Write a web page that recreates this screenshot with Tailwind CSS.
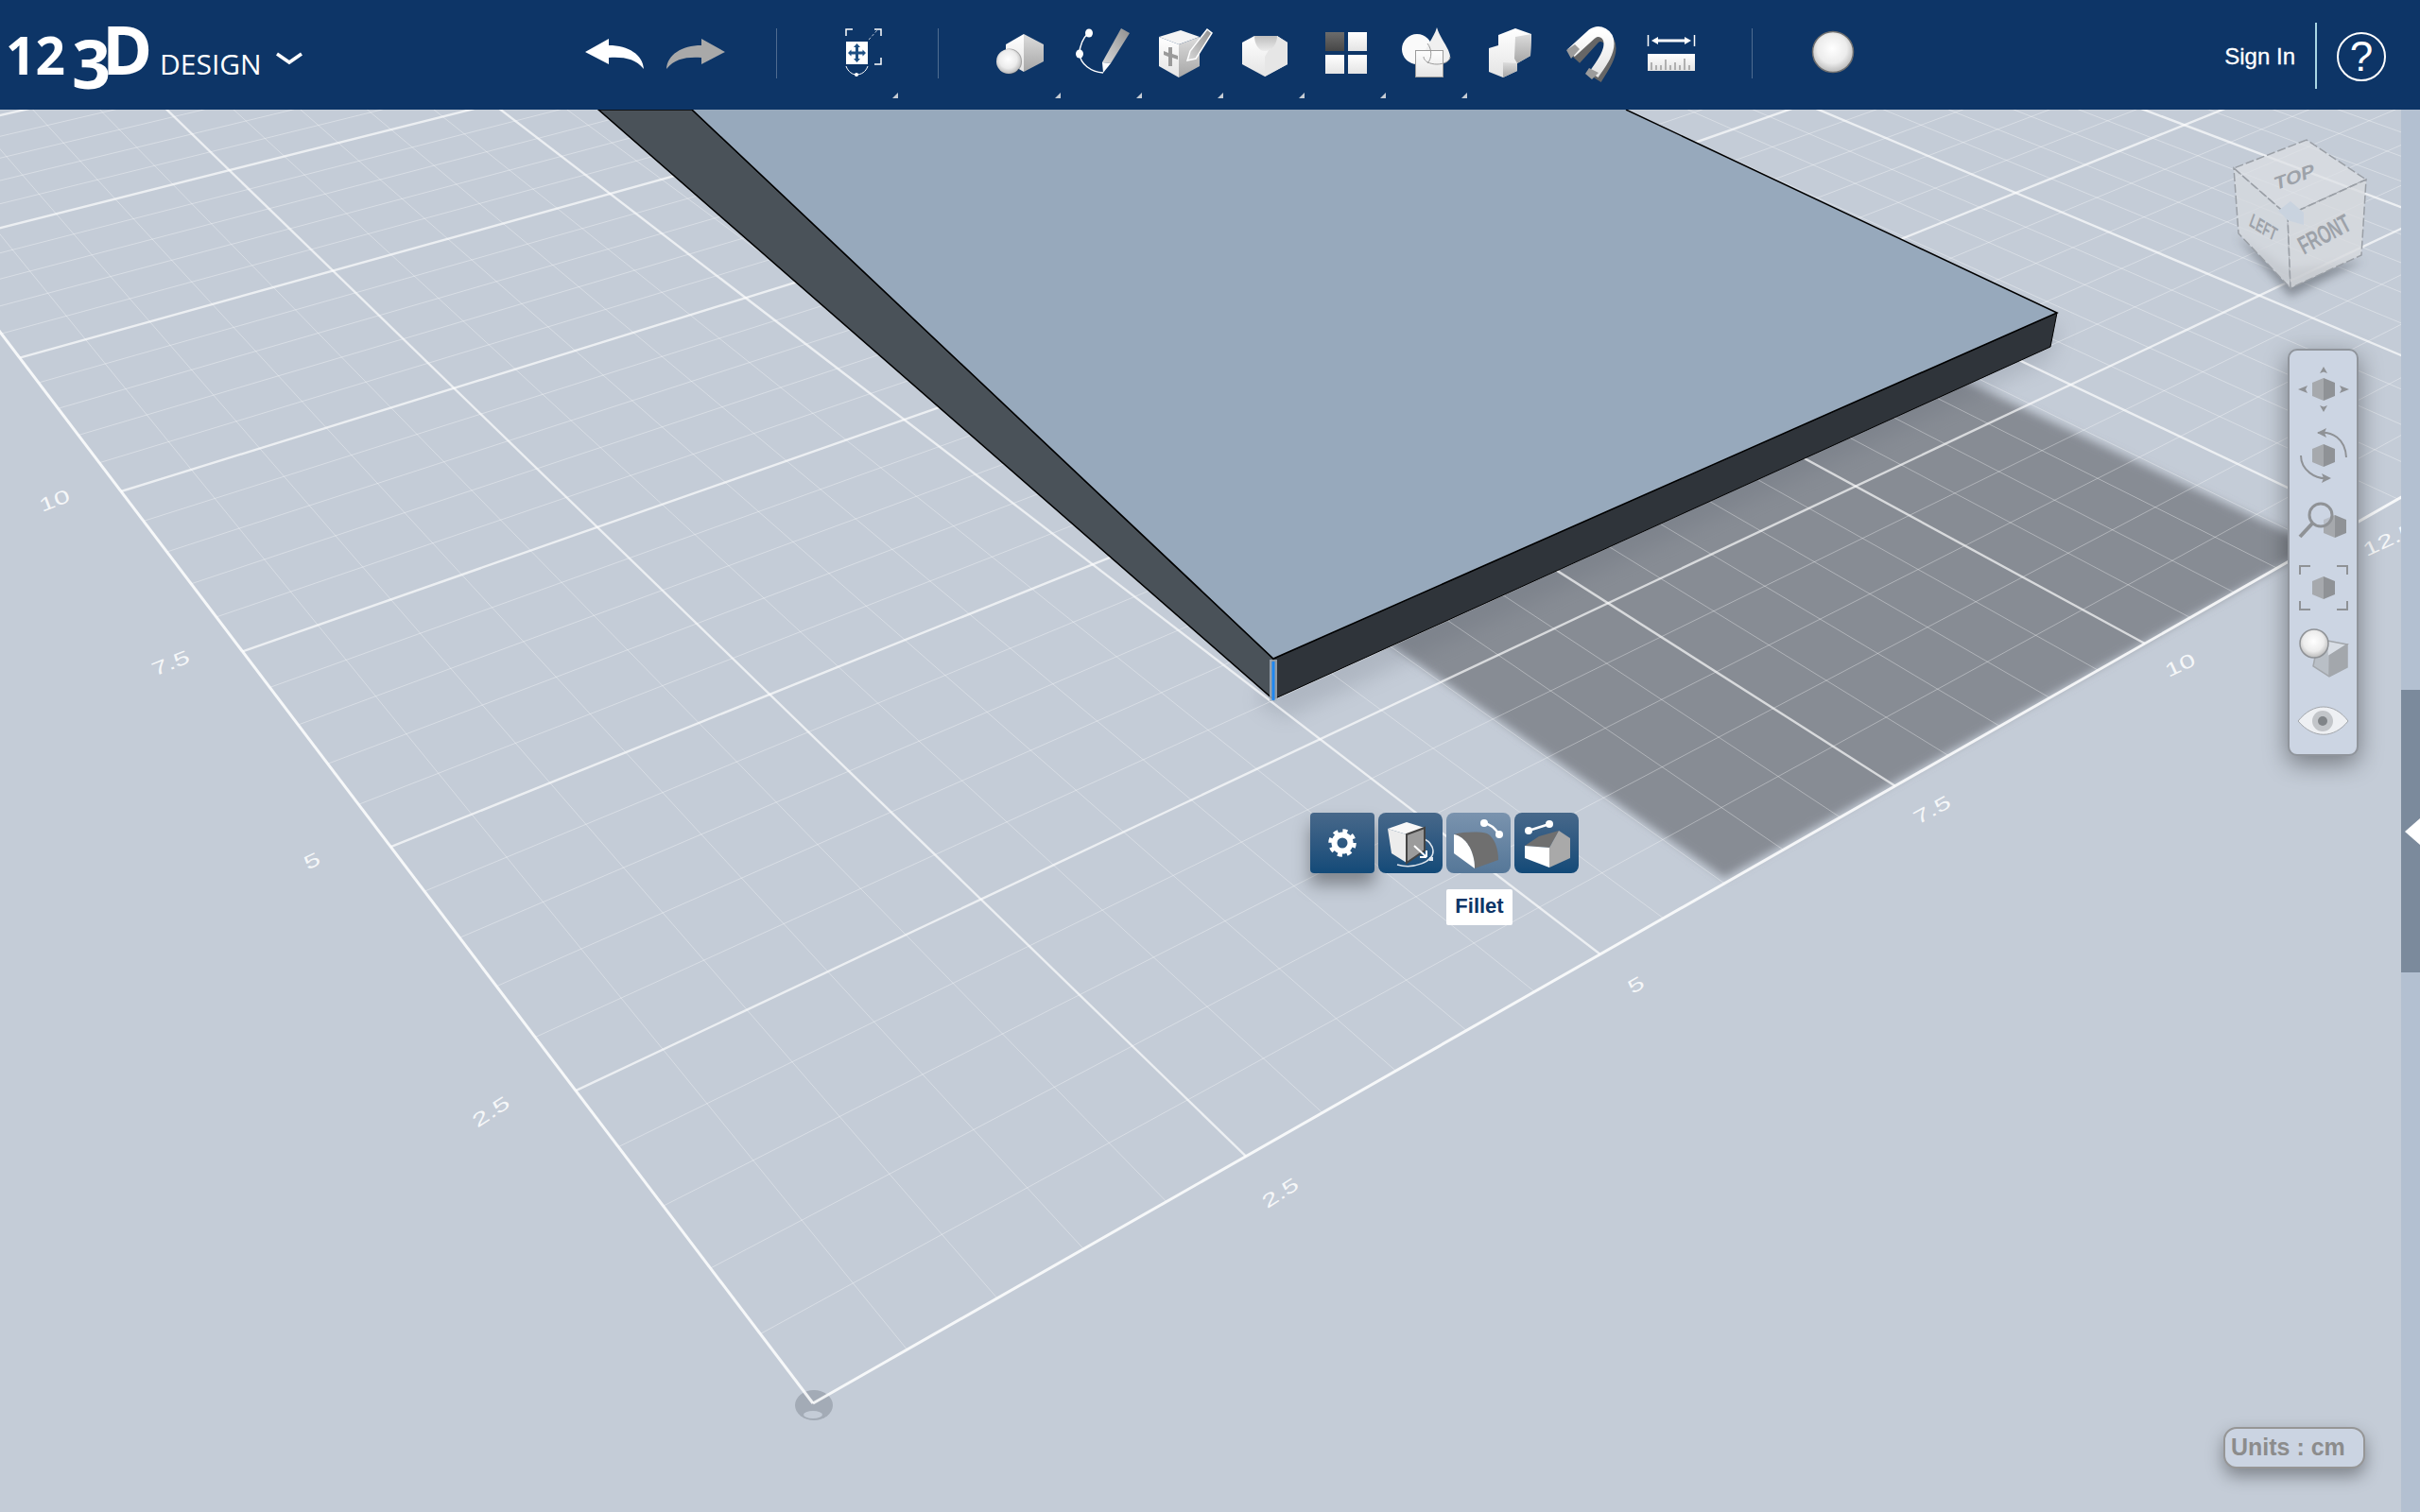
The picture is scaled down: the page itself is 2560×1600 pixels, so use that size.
<!DOCTYPE html>
<html lang="en">
<head>
  <meta charset="UTF-8" />
  <title>123D Design</title>
  <script src="https://cdn.jsdelivr.net/npm/@tailwindcss/browser@4"></script>
</head>
<body class="h-screen w-screen overflow-hidden bg-[#c4ccd7] font-['Liberation_Sans',sans-serif]">

  <!-- shared gradients -->
  <svg class="absolute w-0 h-0">
    <defs>
      <linearGradient id="wg" x1="0" y1="0" x2="0" y2="1"><stop offset="0" stop-color="#ffffff"/><stop offset="1" stop-color="#e4e4e4"/></linearGradient>
      <linearGradient id="gg" x1="0" y1="0" x2="0" y2="1"><stop offset="0" stop-color="#dcdcdc"/><stop offset="1" stop-color="#a6a6a6"/></linearGradient>
      <linearGradient id="dg" x1="0" y1="0" x2="0" y2="1"><stop offset="0" stop-color="#6c6c6c"/><stop offset="1" stop-color="#474747"/></linearGradient>
      <linearGradient id="hollow" x1="0" y1="0" x2="0" y2="1"><stop offset="0" stop-color="#bdbdbd"/><stop offset="1" stop-color="#ececec"/></linearGradient>
      <linearGradient id="pen" x1="1" y1="0" x2="0" y2="1"><stop offset="0" stop-color="#8f8f8f"/><stop offset="1" stop-color="#d8d8d8"/></linearGradient>
      <radialGradient id="ball" cx=".48" cy=".42" r=".6"><stop offset="0" stop-color="#ffffff"/><stop offset=".6" stop-color="#ececec"/><stop offset="1" stop-color="#b4b4b4"/></radialGradient>
      <filter id="b6" x="-20%" y="-20%" width="140%" height="140%"><feGaussianBlur stdDeviation="5"/></filter>
      <filter id="b12" x="-30%" y="-30%" width="160%" height="160%"><feGaussianBlur stdDeviation="10"/></filter>
    </defs>
  </svg>

  <div class="flex flex-col h-full">
    <!-- top bar -->
    <header class="h-[116px] shrink-0 bg-[#0d3567] flex items-start text-white">
      <div class="w-[619px] h-[116px] shrink-0 flex items-start">
        <div class="w-[291px] shrink-0 flex items-baseline h-[116px] pl-[6px] pt-[15px] font-['Open_Sans',sans-serif] leading-none font-bold whitespace-nowrap">
          <span class="w-[70px] shrink-0 text-[55px]">12</span>
          <span class="w-[32px] shrink-0 text-[72px] translate-y-[15px]">3</span>
          <span class="w-[61px] shrink-0 text-[72px]">D</span>
          <span class="text-[30px] font-normal">DESIGN</span>
        </div>
        <svg class="w-[30px] h-[116px]" viewBox="291 0 30 116"><path d="M293 57L306 66L319 57" fill="none" stroke="#fff" stroke-width="3.5"/></svg>
      </div>

      <svg class="w-[62px] h-[116px] shrink-0" viewBox="619 0 62 116"><path d="M619 55L644 41V48C665 48 680 58 681 73C672 62 660 60 644 61V68Z" fill="#fff"/></svg>
      <svg class="ml-[24px] w-[62px] h-[116px] shrink-0" viewBox="705 0 62 116"><path d="M767 55L742 41V48C721 48 706 58 705 73C714 62 726 60 742 61V68Z" fill="#a9a9a9"/></svg>
      <div class="ml-[54px] mt-[30px] w-px h-[53px] bg-[#4f6c90]"></div>

      <!-- transform -->
      <div class="relative ml-[40px] w-[90px] h-[116px] shrink-0">
        <svg class="w-[90px] h-[116px]" viewBox="862 0 90 116">
          <path d="M895 38V31H902M925 31H932V38M932 61V68H925" fill="none" stroke="#fff" stroke-width="1.5"/>
          <path d="M919 42L928 32" stroke="#b8c4d4" stroke-width="1" stroke-dasharray="3 2"/>
          <rect x="895" y="44" width="23" height="24" fill="#fff"/>
          <path d="M906.5 46L910 50H908V54.5H912.5V52.5L916 56L912.5 59.5V57.5H908V62H910L906.5 66L903 62H905V57.5H900.5V59.5L897 56L900.5 52.500V54.5H905V50H903Z" fill="#1d4f82"/>
          <path d="M895 70C897 76 902 79 906 79C911 79 916 76 918 70" fill="none" stroke="#fff" stroke-width="1"/>
          <circle cx="906" cy="79" r="2" fill="#fff"/>
        </svg>
        <svg class="absolute left-[82px] top-[98px] w-[6px] h-[6px]" viewBox="0 0 6 6"><path d="M6 0V6H0Z" fill="#c6ccd4"/></svg>
      </div>
      <div class="ml-[40px] mt-[30px] w-px h-[53px] bg-[#4f6c90]"></div>

      <!-- tool slots, 86px each -->
      <div class="ml-[43px] flex shrink-0">
        <div class="relative w-[86px] h-[116px]">
          <svg class="w-[86px] h-[116px]" viewBox="1036 0 86 116">
            <path d="M1083 36L1064 47V65L1083 76Z" fill="url(#wg)"/>
            <path d="M1083 36L1104 47V65L1083 76Z" fill="url(#gg)"/>
            <ellipse cx="1068" cy="65" rx="13" ry="13.500" fill="#555" opacity=".5"/>
            <ellipse cx="1067" cy="65" rx="13" ry="13" fill="url(#ball)"/>
          </svg>
          <svg class="absolute right-0 top-[98px] w-[6px] h-[6px]" viewBox="0 0 6 6"><path d="M6 0V6H0Z" fill="#c6ccd4"/></svg>
        </div>
        <div class="relative w-[86px] h-[116px]">
          <svg class="w-[86px] h-[116px]" viewBox="1122 0 86 116">
            <path d="M1152 34C1146 40 1142 48 1142 57C1143 68 1154 76 1167 77" fill="none" stroke="#fff" stroke-width="1.500"/>
            <ellipse cx="1152" cy="35" rx="4" ry="4.500" fill="#fff"/>
            <ellipse cx="1142" cy="57" rx="4" ry="4.500" fill="#fff"/>
            <path d="M1186 30L1195 35L1175 67L1166 66Z" fill="url(#pen)"/>
            <path d="M1166 66L1175 67L1167 77Z" fill="#fff"/>
          </svg>
          <svg class="absolute right-0 top-[98px] w-[6px] h-[6px]" viewBox="0 0 6 6"><path d="M6 0V6H0Z" fill="#c6ccd4"/></svg>
        </div>
        <div class="relative w-[86px] h-[116px]">
          <svg class="w-[86px] h-[116px]" viewBox="1208 0 86 116">
            <path d="M1249 32L1226 39L1247 47L1269 39Z" fill="#f4f4f4"/>
            <path d="M1226 39V70L1247 82V47Z" fill="url(#wg)"/>
            <path d="M1247 47L1269 39V70L1247 82Z" fill="url(#gg)"/>
            <path d="M1236 50H1240V57L1246 59V63L1240 61V70H1236V60L1231 58V54L1236 56Z" fill="#9a9a9a"/>
            <path d="M1277 31L1282 35L1265 62L1256 64L1259 54Z" fill="url(#pen)" stroke="#fff" stroke-width="1.500"/>
          </svg>
          <svg class="absolute right-0 top-[98px] w-[6px] h-[6px]" viewBox="0 0 6 6"><path d="M6 0V6H0Z" fill="#c6ccd4"/></svg>
        </div>
        <div class="relative w-[86px] h-[116px]">
          <svg class="w-[86px] h-[116px]" viewBox="1294 0 86 116">
            <path d="M1327 38H1351L1362 45V68L1338 81L1314 68V45Z" fill="url(#wg)"/>
            <path d="M1351 38L1362 45V68L1338 81V60Z" fill="#e6e6e6"/>
            <path d="M1327 38H1351C1351 46 1346 54 1338 54C1331 54 1327 46 1327 38Z" fill="url(#hollow)"/>
          </svg>
          <svg class="absolute right-0 top-[98px] w-[6px] h-[6px]" viewBox="0 0 6 6"><path d="M6 0V6H0Z" fill="#c6ccd4"/></svg>
        </div>
        <div class="relative w-[86px] h-[116px]">
          <svg class="w-[86px] h-[116px]" viewBox="1380 0 86 116">
            <rect x="1402" y="34" width="20" height="20" fill="url(#dg)"/>
            <rect x="1426" y="34" width="20" height="20" fill="url(#wg)"/>
            <rect x="1402" y="58" width="20" height="20" fill="url(#wg)"/>
            <rect x="1426" y="58" width="20" height="20" fill="url(#wg)"/>
          </svg>
          <svg class="absolute right-0 top-[98px] w-[6px] h-[6px]" viewBox="0 0 6 6"><path d="M6 0V6H0Z" fill="#c6ccd4"/></svg>
        </div>
        <div class="relative w-[86px] h-[116px]">
          <svg class="w-[86px] h-[116px]" viewBox="1466 0 86 116">
            <ellipse cx="1499" cy="52" rx="16" ry="16" fill="#fafafa"/>
            <path d="M1520 29C1523 40 1534 52 1534 60C1534 65 1527 68 1520 68C1513 68 1506 65 1506 60C1506 52 1517 40 1520 29Z" fill="#f0f0f0"/>
            <rect x="1497" y="53" width="30" height="29" fill="url(#wg)"/>
            <rect x="1497.500" y="53.500" width="29" height="28" fill="none" stroke="#9b9b9b"/>
            <path d="M1506 60C1506 65 1513 68 1520 68C1527 68 1534 65 1534 60" fill="none" stroke="#9b9b9b"/>
            <path d="M1510 46C1515 52 1515 62 1510 67" fill="none" stroke="#9b9b9b"/>
          </svg>
          <svg class="absolute right-0 top-[98px] w-[6px] h-[6px]" viewBox="0 0 6 6"><path d="M6 0V6H0Z" fill="#c6ccd4"/></svg>
        </div>
        <div class="w-[86px] h-[116px]">
          <svg class="w-[86px] h-[116px]" viewBox="1552 0 86 116">
            <path d="M1585 37L1603 30L1620 36L1619 59L1605 67V75L1590 82L1575 76V51L1585 48Z" fill="url(#wg)"/>
            <path d="M1603 39L1620 36L1619 59L1605 67L1602 62Z" fill="url(#gg)"/>
            <path d="M1590 66L1605 67V75L1590 82Z" fill="url(#gg)"/>
          </svg>
        </div>
        <div class="w-[86px] h-[116px]">
          <svg class="w-[86px] h-[116px]" viewBox="1638 0 86 116">
            <path d="M1665 60L1685 38C1692 32 1702 38 1702 48C1702 58 1695 68 1687 81" fill="none" stroke="#666" stroke-width="11" transform="translate(2 3)"/>
            <path d="M1662 56L1684 36C1692 30 1702 36 1702 46C1702 57 1694 67 1686 79" fill="none" stroke="url(#wg)" stroke-width="11"/>
            <path d="M1657 53L1666 47L1671 52L1662 62Z" fill="#9c9c9c"/>
            <path d="M1681 72L1691 77L1684 84L1677 78Z" fill="#9c9c9c"/>
          </svg>
        </div>
        <div class="w-[86px] h-[116px]">
          <svg class="w-[86px] h-[116px]" viewBox="1724 0 86 116">
            <path d="M1743.500 37V49M1792.500 37V49" stroke="#fff" stroke-width="1.500"/>
            <path d="M1747 43L1754 39V41.500H1782V39L1789 43L1782 47V44.500H1754V47Z" fill="#fff"/>
            <rect x="1743" y="57" width="50" height="18" fill="url(#wg)"/>
            <path d="M1747 74V66M1752 74V69M1757 74V69M1762 74V63M1767 74V69M1772 74V66M1777 74V69M1782 74V62M1787 74V69" stroke="#9c9c9c" stroke-width="1.500"/>
          </svg>
        </div>
      </div>

      <div class="ml-[43px] mt-[30px] w-px h-[53px] bg-[#4f6c90]"></div>
      <svg class="ml-[60px] w-[50px] h-[116px] shrink-0" viewBox="1915 0 50 116">
        <circle cx="1940" cy="55" r="21.500" fill="url(#ball)" stroke="#6f6f6f" stroke-width="1.500"/>
      </svg>

      <div class="ml-auto flex items-start shrink-0 pr-[36px]">
        <span class="mt-[46px] translate-x-[1px] text-[24px] leading-[28px] font-['Liberation_Sans',sans-serif] [-webkit-text-stroke:0.3px_white]">Sign In</span>
        <div class="ml-[22px] mt-[24px] w-[2px] h-[70px] bg-[#a9d6e3]"></div>
        <div class="ml-[21px] mt-[34px] w-[52px] h-[52px] rounded-full border-2 border-white flex items-center justify-center text-[44px] leading-none font-['Liberation_Sans',sans-serif]">?</div>
      </div>
    </header>

    <!-- workspace -->
    <main class="flex-1 flex relative min-h-0">
      <div class="flex-1 relative overflow-hidden bg-[#c4ccd7]">
        <svg class="absolute inset-0 w-[2540px] h-[1484px]" viewBox="0 116 2540 1484">
          <!-- ground shadow -->
          <polygon points="1420,646 1824,929 2450,578 2040,385" fill="#878c94" filter="url(#b6)"/>
          <polygon points="1330,745 1360,760 2170,380 2180,340 1347,700" fill="#5c6470" opacity=".2" filter="url(#b12)"/>

          <ellipse cx="861" cy="1487" rx="20" ry="16" fill="#a3abb6"/>
          <ellipse cx="860" cy="1497" rx="10" ry="4" fill="#c4ccd7"/>

          <!-- grid gets filled in by the script below -->
          <g id="grid" fill="none" stroke="#fff"></g>

          <!-- axis numbers -->
          <g fill="#fff" fill-opacity=".85" font-size="20" font-family="Liberation Sans, sans-serif" text-anchor="middle">
            <text transform="translate(523 1182) rotate(-33) scale(1.55 1)">2.5</text>
            <text transform="translate(333 917) rotate(-26) scale(1.5 1)">5</text>
            <text transform="translate(183 708) rotate(-22) scale(1.5 1)">7.5</text>
            <text transform="translate(60 536) rotate(-21) scale(1.5 1)">10</text>
            <text transform="translate(1358 1268) rotate(-33) scale(1.5 1)">2.5</text>
            <text transform="translate(1734 1048) rotate(-30) scale(1.5 1)">5</text>
            <text transform="translate(2047 863) rotate(-29) scale(1.5 1)">7.5</text>
            <text transform="translate(2309 710) rotate(-25) scale(1.5 1)">10</text>
            <text transform="translate(2530 577) rotate(-25) scale(1.5 1)">12.5</text>
          </g>

          <!-- plate -->
          <polygon points="633,116 732,116 1347,697 1347,740" fill="#4a5259" stroke="#000" stroke-width="1.500"/>
          <polygon points="1347,697 2176,331 2169,367 1347,740" fill="#2f343a" stroke="#000" stroke-width="1"/>
          <polygon points="732,116 1720,116 2176,331 1347,697" fill="#97a9bc"/>
          <path d="M732 116L1347 697L2176 331L1720 116" fill="none" stroke="#000" stroke-width="1.500"/>
          <rect x="1343" y="698" width="8" height="44" fill="#aab4bf" opacity=".8"/>
          <rect x="1345.500" y="700" width="3" height="41" fill="#1f88f2"/>

          <!-- view cube -->
          <polygon points="2366,250 2423,314 2500,276 2423,285" fill="#4d535c" opacity=".5" filter="url(#b6)"/>
          <g stroke="#9a9fa6" stroke-width="1.500" stroke-dasharray="9 3">
            <polygon points="2440,148 2363,178 2420,228 2503,190" fill="#dcdfe3" fill-opacity=".72"/>
            <polygon points="2363,178 2420,228 2423,305 2368,247" fill="#d6d9de" fill-opacity=".8"/>
            <polygon points="2420,228 2503,190 2498,270 2423,305" fill="#d8dbdf" fill-opacity=".8"/>
          </g>
          <polygon points="2410,223 2423,213 2437,225 2437,238 2420,233" fill="#c9d3df"/>
          <g fill="#9da2a9" font-weight="bold" font-family="Liberation Sans, sans-serif" text-anchor="middle">
            <text transform="translate(2428 194) rotate(-20) skewX(-14) scale(1.15 1)" font-size="19">TOP</text>
            <text transform="translate(2392 247) rotate(32) skewX(12) scale(.85 1.3)" font-size="15">LEFT</text>
            <text transform="translate(2463 256) rotate(-28) scale(.85 1.35)" font-size="20">FRONT</text>
          </g>
        </svg>

        <!-- navigation panel -->
        <div class="absolute left-[2420px] top-[253px] w-[75px] h-[431px] bg-[#ccd5e3] border-2 border-[#90959c] rounded-[10px] shadow-[0_8px_26px_rgba(0,0,0,0.4)] flex flex-col items-center gap-[10px] pt-[11px]">
          <svg class="w-[60px] h-[60px]" viewBox="2428 382 60 60">
            <path d="M2458 400L2470 405V419L2458 424Z" fill="#8f9296"/><path d="M2458 400L2446 405V419L2458 424Z" fill="#a6a9ad"/>
            <path d="M2458 388L2454 395L2458 393.500L2462 395ZM2458 436L2454 429L2458 430.500L2462 429ZM2431 412L2441 408L2439 412L2441 416ZM2485 412L2475 408L2477 412L2475 416Z" fill="#8f9296"/>
          </svg>
          <svg class="w-[60px] h-[60px]" viewBox="2428 452 60 60">
            <path d="M2458 470L2470 475V489L2458 494Z" fill="#8f9296"/><path d="M2458 470L2446 475V489L2458 494Z" fill="#a6a9ad"/>
            <path d="M2452 458C2467 456 2481 464 2482 484M2434 482C2434 497 2449 508 2464 506" fill="none" stroke="#8f9296" stroke-width="2"/>
            <path d="M2451 458L2461 453L2459 458L2461 463ZM2466 506L2456 501L2458 506L2456 511Z" fill="#8f9296"/>
          </svg>
          <svg class="w-[60px] h-[60px]" viewBox="2428 522 60 60">
            <path d="M2470 545L2482 550V564L2470 569Z" fill="#8f9296"/><path d="M2470 545L2458 550V564L2470 569Z" fill="#a6a9ad"/>
            <ellipse cx="2455" cy="545" rx="12" ry="12" fill="#ccd5e3" fill-opacity=".5" stroke="#8f9296" stroke-width="3"/>
            <path d="M2446 554L2433 568" stroke="#8f9296" stroke-width="4"/>
          </svg>
          <svg class="w-[60px] h-[60px]" viewBox="2428 592 60 60">
            <path d="M2458 610L2470 615V629L2458 634Z" fill="#8f9296"/><path d="M2458 610L2446 615V629L2458 634Z" fill="#a6a9ad"/>
            <path d="M2433 608V599H2444M2472 599H2483V608M2483 636V645H2472M2444 645H2433V636" fill="none" stroke="#8f9296" stroke-width="2"/>
          </svg>
          <svg class="w-[60px] h-[60px]" viewBox="2428 662 60 60">
            <path d="M2450 690L2483 682V706L2464 716L2447 705Z" fill="#b9bfc6" stroke="#a3a7ac" stroke-width="1.500"/>
            <path d="M2462 678L2483 682L2464 694L2464 716" fill="#d9dee5" stroke="#a3a7ac" stroke-width="1.500"/>
            <path d="M2464 694L2483 682V706L2464 716Z" fill="#a3a7ac"/>
            <circle cx="2448" cy="681" r="15" fill="url(#ball)" stroke="#8f9296" stroke-width="1.500"/>
          </svg>
          <svg class="w-[60px] h-[60px]" viewBox="2428 732 60 60">
            <path d="M2431 763C2447 743 2469 743 2484 763C2469 782 2447 782 2431 763Z" fill="#eef0f3" stroke="#a3a7ac" stroke-width="1"/>
            <circle cx="2457" cy="763" r="11" fill="#c2c5c9"/><circle cx="2457" cy="763" r="5" fill="#808488"/>
          </svg>
        </div>

        <!-- mini toolbar -->
        <div class="absolute left-[1386px] top-[744px] flex gap-[4px]">
          <div class="w-[68px] h-[64px] rounded-[4px] bg-linear-to-b from-[#47688a] to-[#124a78] shadow-[0_12px_18px_rgba(0,0,0,0.35)]">
            <svg class="w-[68px] h-[64px]" viewBox="1386 860 68 64">
              <circle cx="1420" cy="892" r="8.500" fill="none" stroke="#fff" stroke-width="6"/>
              <circle cx="1420" cy="892" r="12.500" fill="none" stroke="#fff" stroke-width="4.500" stroke-dasharray="4.900 4.920"/>
            </svg>
          </div>
          <div class="w-[68px] h-[64px] rounded-[8px] bg-linear-to-b from-[#47688a] to-[#124a78]">
            <svg class="w-[68px] h-[64px]" viewBox="1458 860 68 64">
              <path d="M1478 915C1495 920 1517 912 1516 900C1515 893 1511 890 1507 888" fill="none" stroke="#dfe6ee" stroke-width="1.500"/>
              <path d="M1468 877L1488 870L1507 876L1488 883Z" fill="#f8f8f8"/>
              <path d="M1468 877L1488 883V913L1472 903Z" fill="#ececec"/>
              <path d="M1488 883L1507 876V900L1488 913Z" fill="#9b9b9b" stroke="#444" stroke-width="2"/>
              <path d="M1496 895L1509 907M1509 907V900M1509 907H1502" fill="none" stroke="#fff" stroke-width="2"/>
              <rect x="1512" y="907" width="4" height="4" fill="#dfe6ee"/>
            </svg>
          </div>
          <div class="w-[68px] h-[64px] rounded-[8px] bg-linear-to-b from-[#7a93ae] to-[#557798]">
            <svg class="w-[68px] h-[64px]" viewBox="1530 860 68 64">
              <path d="M1538 883C1548 880 1566 880 1573 882C1581 886 1585 898 1585 910L1560 919C1560 900 1550 885 1538 883Z" fill="#6f6f6f"/>
              <path d="M1538 883C1550 885 1560 900 1560 919L1538 903Z" fill="#fff"/>
              <path d="M1570 871C1576 872 1582 877 1586 883" fill="none" stroke="#fff" stroke-width="2.500"/>
              <circle cx="1570" cy="871" r="4" fill="#fff"/><circle cx="1586" cy="883" r="4" fill="#fff"/>
            </svg>
          </div>
          <div class="w-[68px] h-[64px] rounded-[8px] bg-linear-to-b from-[#47688a] to-[#124a78]">
            <svg class="w-[68px] h-[64px]" viewBox="1602 860 68 64">
              <path d="M1617 879L1639 872" stroke="#fff" stroke-width="2.500"/>
              <circle cx="1617" cy="879" r="4" fill="#fff"/><circle cx="1639" cy="872" r="4" fill="#fff"/>
              <path d="M1613 895L1628 885L1649 879L1639 897Z" fill="#6f6f6f"/>
              <path d="M1613 895L1639 897V918L1613 908Z" fill="#fff"/>
              <path d="M1639 897L1649 879L1661 887V908L1639 918Z" fill="#a9a9a9"/>
            </svg>
          </div>
        </div>

        <div class="absolute left-[1530px] top-[825px] w-[70px] h-[38px] bg-white rounded-[2px] flex items-center justify-center pb-[3px] text-[22px] font-bold text-[#0d3567]">Fillet</div>

        <div class="absolute left-[2352px] top-[1394px] w-[150px] h-[44px] bg-[#cbd4e2] border-2 border-[#969696] rounded-[14px] shadow-[0_8px_18px_rgba(0,0,0,0.35)] pl-[6px] flex items-center text-[25px] font-bold text-[#8c8c8c]">Units : cm</div>
      </div>

      <!-- side strip -->
      <div class="w-[20px] shrink-0 bg-[#b3c0d1] relative">
        <div class="absolute left-0 top-[614px] w-[20px] h-[299px] bg-[#7b8a9c] flex items-center justify-end">
          <svg class="w-[16px] h-[28px]" viewBox="0 0 16 28"><path d="M0 14L16 0V28Z" fill="#fff"/></svg>
        </div>
      </div>
    </main>
  </div>

  <script>
    // ground plane: cm -> screen px, fitted to the axis marks
    function plane(u, v) {
      u = u / 10; v = v / 10;
      var w = 1 + 0.445 * u + 0.565 * v;
      return [(860 + 2418.7 * u - 659.6 * v) / w, (1485 - 501 * u - 671.2 * v) / w];
    }
    var grid = document.getElementById('grid');
    function addLine(a, b, width, alpha) {
      var l = document.createElementNS('http://www.w3.org/2000/svg', 'line');
      l.setAttribute('x1', a[0]); l.setAttribute('y1', a[1]);
      l.setAttribute('x2', b[0]); l.setAttribute('y2', b[1]);
      l.setAttribute('stroke-width', width);
      l.setAttribute('stroke-opacity', alpha);
      grid.appendChild(l);
    }
    var max = 40;
    for (var pass = 0; pass < 3; pass++) {
      for (var i = 0; i <= max * 2; i++) {
        var c = i / 2;
        var axis = i === 0, major = i % 5 === 0;
        if (pass === 0 && !major) { addLine(plane(c, 0), plane(c, max), 1, 0.34); addLine(plane(0, c), plane(max, c), 1, 0.34); }
        if (pass === 1 && major && !axis) { addLine(plane(c, 0), plane(c, max), 2.4, 0.68); addLine(plane(0, c), plane(max, c), 2.4, 0.68); }
        if (pass === 2 && axis) { addLine(plane(0, 0), plane(max, 0), 3, 0.85); addLine(plane(0, 0), plane(0, max), 3, 0.85); }
      }
    }
  </script>
</body>
</html>
